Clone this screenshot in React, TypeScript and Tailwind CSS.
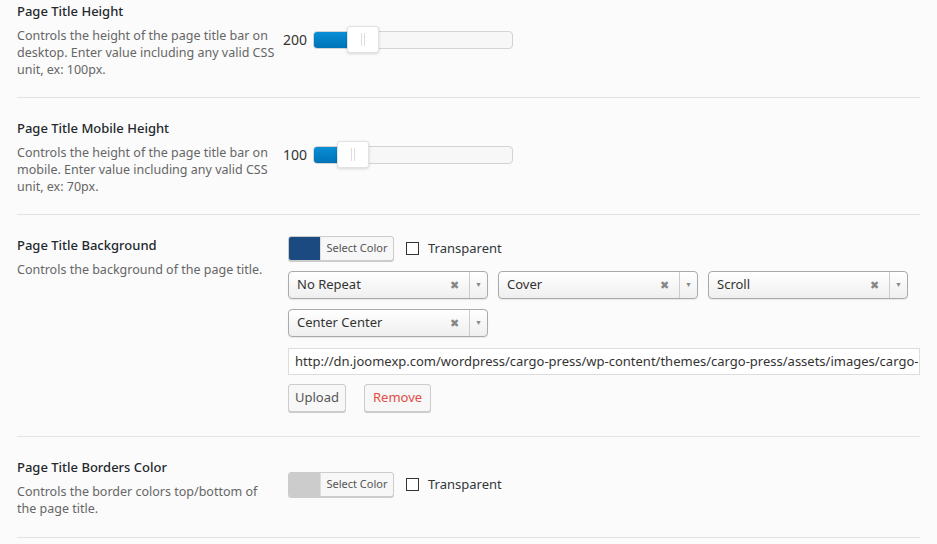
import type { ReactNode } from "react";

function Slider({ value, fill, handle }: { value: string; fill: number; handle: number }) {
  return (
    <div className="flex items-center pt-[26px]">
      <span className="w-[30px] text-[14px] text-[#333]">{value}</span>
      <div className="relative h-[18px] w-[200px] rounded-[4px] border border-[#d3d3d3] bg-[#f7f7f7]">
        <div className="h-full rounded-l-[3px] bg-gradient-to-b from-[#0a8fd6] to-[#0073b7]" style={{ width: fill }} />
        <div
          className="absolute top-[-6px] flex h-[27px] w-[32px] items-center justify-center gap-[2px] rounded-[3px] border border-[#e2e2e2] bg-white shadow-[0_1px_3px_rgba(0,0,0,0.15)]"
          style={{ left: handle }}
        >
          <span className="h-[13px] w-px bg-[#ddd]" />
          <span className="h-[13px] w-px bg-[#ddd]" />
        </div>
      </div>
    </div>
  );
}

function ColorButton({ color }: { color: string }) {
  return (
    <div className="flex items-center">
      <div className="flex h-[25px] w-[106px] overflow-hidden rounded-[3px] border border-[#ccc] bg-[#f7f7f7] shadow-[0_1px_0_#ccc]">
        <div className="w-[31px]" style={{ background: color }} />
        <span className="flex flex-1 items-center justify-center border-l border-[#ddd] text-[11px] text-[#555]">Select Color</span>
      </div>
      <label className="ml-[12px] flex items-center gap-[9px] text-[13px] text-[#32373c]">
        <span className="h-[13px] w-[13px] border border-[#333] bg-white" />
        Transparent
      </label>
    </div>
  );
}

function Select({ label }: { label: string }) {
  return (
    <div className="flex h-[28px] w-[200px] items-center rounded-[4px] border border-[#aaa] bg-gradient-to-b from-white to-[#efefef] shadow-[0_1px_1px_rgba(0,0,0,0.08)]">
      <span className="flex-1 pl-[8px] text-[13px] text-[#333]">{label}</span>
      <span className="mr-[10px] text-[11px] text-[#888]">✖</span>
      <span className="flex h-full w-[18px] items-center justify-center border-l border-[#ccc] text-[7px] text-[#888]">▼</span>
    </div>
  );
}

function Row({ title, desc, children, className }: { title: string; desc: string; children: ReactNode; className: string }) {
  return (
    <div className={`flex border-b border-[#e3e3e3] ${className}`}>
      <div className="w-[266px] shrink-0">
        <h3 className="text-[13px] font-medium leading-[17px] text-[#23282d]">{title}</h3>
        <p className="mt-[7px] w-[260px] text-[12.5px] leading-[17px] text-[#666]">{desc}</p>
      </div>
      <div className="min-w-0 flex-1">{children}</div>
    </div>
  );
}

export default function App() {
  return (
    <div className="min-h-[544px] bg-[#fbfbfb] pl-[17px] pr-[17px] font-['Noto_Sans',sans-serif]">
      <Row
        className="h-[98px] pt-[3px]"
        title="Page Title Height"
        desc="Controls the height of the page title bar on desktop. Enter value including any valid CSS unit, ex: 100px."
      >
        <Slider value="200" fill={36} handle={33} />
      </Row>
      <Row
        className="h-[117px] pt-[22px]"
        title="Page Title Mobile Height"
        desc="Controls the height of the page title bar on mobile. Enter value including any valid CSS unit, ex: 70px."
      >
        <div className="-mt-[2px]">
          <Slider value="100" fill={26} handle={23} />
        </div>
      </Row>
      <Row className="h-[222px] pt-[22px]" title="Page Title Background" desc="Controls the background of the page title.">
        <div className="-mt-[1px] pl-[5px]">
          <ColorButton color="#1a4a80" />
          <div className="mt-[10px] flex flex-wrap gap-x-[10px] gap-y-[10px]">
            <Select label="No Repeat" />
            <Select label="Cover" />
            <Select label="Scroll" />
            <Select label="Center Center" />
          </div>
          <div className="mt-[11px] flex h-[27px] items-center overflow-hidden whitespace-nowrap border border-[#ddd] bg-white px-[6px] text-[13px] text-[#333]">
            http://dn.joomexp.com/wordpress/cargo-press/wp-content/themes/cargo-press/assets/images/cargo-
          </div>
          <div className="mt-[9px] flex gap-[18px]">
            <button className="h-[28px] rounded-[3px] border border-[#ccc] bg-[#f7f7f7] px-[6px] text-[13px] text-[#555] shadow-[0_1px_0_#ccc]">Upload</button>
            <button className="h-[28px] rounded-[3px] border border-[#ccc] bg-[#f7f7f7] px-[8px] text-[13px] text-[#e14d43] shadow-[0_1px_0_#ccc]">Remove</button>
          </div>
        </div>
      </Row>
      <Row className="h-[101px] pt-[22px]" title="Page Title Borders Color" desc="Controls the border colors top/bottom of the page title.">
        <div className="pl-[5px] pt-[13px]">
          <ColorButton color="#cccccc" />
        </div>
      </Row>
    </div>
  );
}
